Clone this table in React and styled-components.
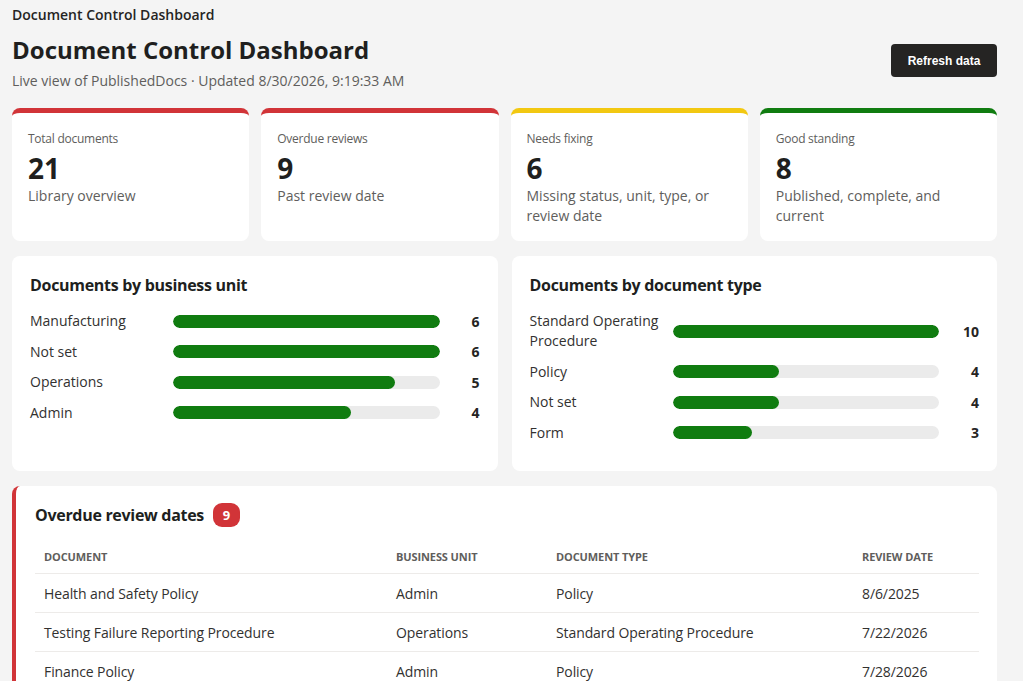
import React from "react";
import styled, { createGlobalStyle } from "styled-components";

const FONT = `"Open Sans", "Noto Sans", sans-serif`;

const Global = createGlobalStyle`
  html, body { margin: 0; padding: 0; background: #f4f4f4; }
  body { font-family: ${FONT}; color: #252423; }
  * { box-sizing: border-box; }
`;

const Page = styled.div`
  width: 985px;
  padding: 6px 0 0 12px;
  box-sizing: content-box;
`;

const TopTitle = styled.div`
  font-size: 14px;
  font-weight: 600;
  line-height: 18px;
  color: #252423;
`;

const Header = styled.header`
  display: flex;
  align-items: flex-start;
  justify-content: space-between;
  margin-top: 10px;
`;

const H1 = styled.h1`
  margin: 0;
  font-size: 24px;
  font-weight: 700;
  line-height: 32px;
  color: #201f1e;
`;

const Sub = styled.div`
  margin-top: 5px;
  font-size: 14px;
  line-height: 20px;
  color: #605e5c;
`;

const Button = styled.button`
  font-family: "Liberation Sans", Arial, sans-serif;
  font-size: 12px;
  font-weight: 700;
  color: #fff;
  background: #252423;
  border: none;
  border-radius: 4px;
  width: 106px;
  height: 33px;
  margin-top: 10px;
`;

const KpiGrid = styled.div`
  display: grid;
  grid-template-columns: repeat(4, 1fr);
  gap: 12px;
  margin-top: 17px;
`;

const Kpi = styled.div`
  background: #fff;
  border-radius: 8px;
  border-top: 5px solid ${(p) => p.$accent};
  padding: 18px 16px 16px;
  height: 133px;
`;

const KpiLabel = styled.div`
  font-size: 12px;
  line-height: 16px;
  letter-spacing: -0.25px;
  color: #605e5c;
`;

const KpiValue = styled.div`
  margin-top: 3px;
  font-size: 28px;
  font-weight: 700;
  line-height: 36px;
  color: #201f1e;
`;

const KpiNote = styled.div`
  font-size: 14px;
  line-height: 20px;
  color: #605e5c;
`;

const ChartGrid = styled.div`
  display: grid;
  grid-template-columns: 1fr 1fr;
  gap: 14px;
  margin-top: 15px;
`;

const Card = styled.section`
  background: #fff;
  border-radius: 8px;
  padding: 18px 18px 28px;
`;

const CardTitle = styled.h2`
  margin: 0;
  font-size: 16px;
  font-weight: 700;
  line-height: 22px;
  letter-spacing: -0.3px;
  color: #201f1e;
`;

const Rows = styled.div`
  display: grid;
  grid-template-columns: 131px 1fr 28px;
  column-gap: 12px;
  row-gap: 10.6px;
  align-items: center;
  margin-top: 15px;
`;

const RowLabel = styled.div`
  font-size: 14px;
  line-height: 20px;
  color: #323130;
`;

const Track = styled.div`
  height: 13px;
  border-radius: 7px;
  background: #ebebeb;
  overflow: hidden;
`;

const Fill = styled.div`
  height: 100%;
  border-radius: 7px;
  background: #107c10;
`;

const RowValue = styled.div`
  font-size: 14px;
  font-weight: 700;
  text-align: right;
  color: #252423;
`;

const TableCard = styled.section`
  margin-top: 15px;
  background: #fff;
  border-radius: 8px;
  border-left: 4px solid #d13438;
  padding: 17px 18px 0 19px;
  height: 220px;
`;

const TitleRow = styled.div`
  display: flex;
  align-items: center;
  gap: 9px;
`;

const Badge = styled.span`
  display: inline-flex;
  align-items: center;
  justify-content: center;
  min-width: 27px;
  height: 24px;
  padding: 0 7px;
  border-radius: 9px;
  background: #d13438;
  color: #fff;
  font-size: 13px;
  font-weight: 700;
`;

const Table = styled.table`
  width: 100%;
  margin-top: 14px;
  border-collapse: collapse;
  table-layout: fixed;
`;

const Th = styled.th`
  text-align: left;
  font-size: 11px;
  font-weight: 700;
  text-transform: uppercase;
  color: #605e5c;
  letter-spacing: -0.1px;
  padding: 8px 9px;
  line-height: 16px;
  border-bottom: 1px solid #edebe9;
  width: ${(p) => p.$w || "auto"};
`;

const Td = styled.td`
  font-size: 14px;
  line-height: 20px;
  letter-spacing: -0.1px;
  color: #323130;
  padding: 10px 9px 8px;
  border-bottom: 1px solid #edebe9;
  white-space: nowrap;
`;

const kpis = [
  { label: "Total documents", value: 21, note: "Library overview", accent: "#d13438" },
  { label: "Overdue reviews", value: 9, note: "Past review date", accent: "#d13438" },
  { label: "Needs fixing", value: 6, note: "Missing status, unit, type, or review date", accent: "#f2c811" },
  { label: "Good standing", value: 8, note: "Published, complete, and current", accent: "#107c10" },
];

const byUnit = [
  ["Manufacturing", 6],
  ["Not set", 6],
  ["Operations", 5],
  ["Admin", 4],
];

const byType = [
  ["Standard Operating Procedure", 10],
  ["Policy", 4],
  ["Not set", 4],
  ["Form", 3],
];

const overdue = [
  ["Health and Safety Policy", "Admin", "Policy", "8/6/2025"],
  ["Testing Failure Reporting Procedure", "Operations", "Standard Operating Procedure", "7/22/2026"],
  ["Finance Policy", "Admin", "Policy", "7/28/2026"],
];

function BarChart({ title, data }) {
  const max = Math.max(...data.map((d) => d[1]));
  return (
    <Card>
      <CardTitle>{title}</CardTitle>
      <Rows>
        {data.map(([label, v]) => (
          <React.Fragment key={label}>
            <RowLabel>{label}</RowLabel>
            <Track>
              <Fill style={{ width: `${(v / max) * 100}%` }} />
            </Track>
            <RowValue>{v}</RowValue>
          </React.Fragment>
        ))}
      </Rows>
    </Card>
  );
}

export default function App() {
  return (
    <Page>
      <Global />
      <TopTitle>Document Control Dashboard</TopTitle>
      <Header>
        <div>
          <H1>Document Control Dashboard</H1>
          <Sub>Live view of PublishedDocs · Updated 8/30/2026, 9:19:33 AM</Sub>
        </div>
        <Button>Refresh data</Button>
      </Header>
      <KpiGrid>
        {kpis.map((k) => (
          <Kpi key={k.label} $accent={k.accent}>
            <KpiLabel>{k.label}</KpiLabel>
            <KpiValue>{k.value}</KpiValue>
            <KpiNote>{k.note}</KpiNote>
          </Kpi>
        ))}
      </KpiGrid>
      <ChartGrid>
        <BarChart title="Documents by business unit" data={byUnit} />
        <BarChart title="Documents by document type" data={byType} />
      </ChartGrid>
      <TableCard>
        <TitleRow>
          <CardTitle>Overdue review dates</CardTitle>
          <Badge>9</Badge>
        </TitleRow>
        <Table>
          <thead>
            <tr>
              <Th $w="352px">Document</Th>
              <Th $w="160px">Business unit</Th>
              <Th $w="306px">Document type</Th>
              <Th>Review date</Th>
            </tr>
          </thead>
          <tbody>
            {overdue.map((r) => (
              <tr key={r[0]}>
                {r.map((c, i) => (
                  <Td key={i}>{c}</Td>
                ))}
              </tr>
            ))}
          </tbody>
        </Table>
      </TableCard>
    </Page>
  );
}
